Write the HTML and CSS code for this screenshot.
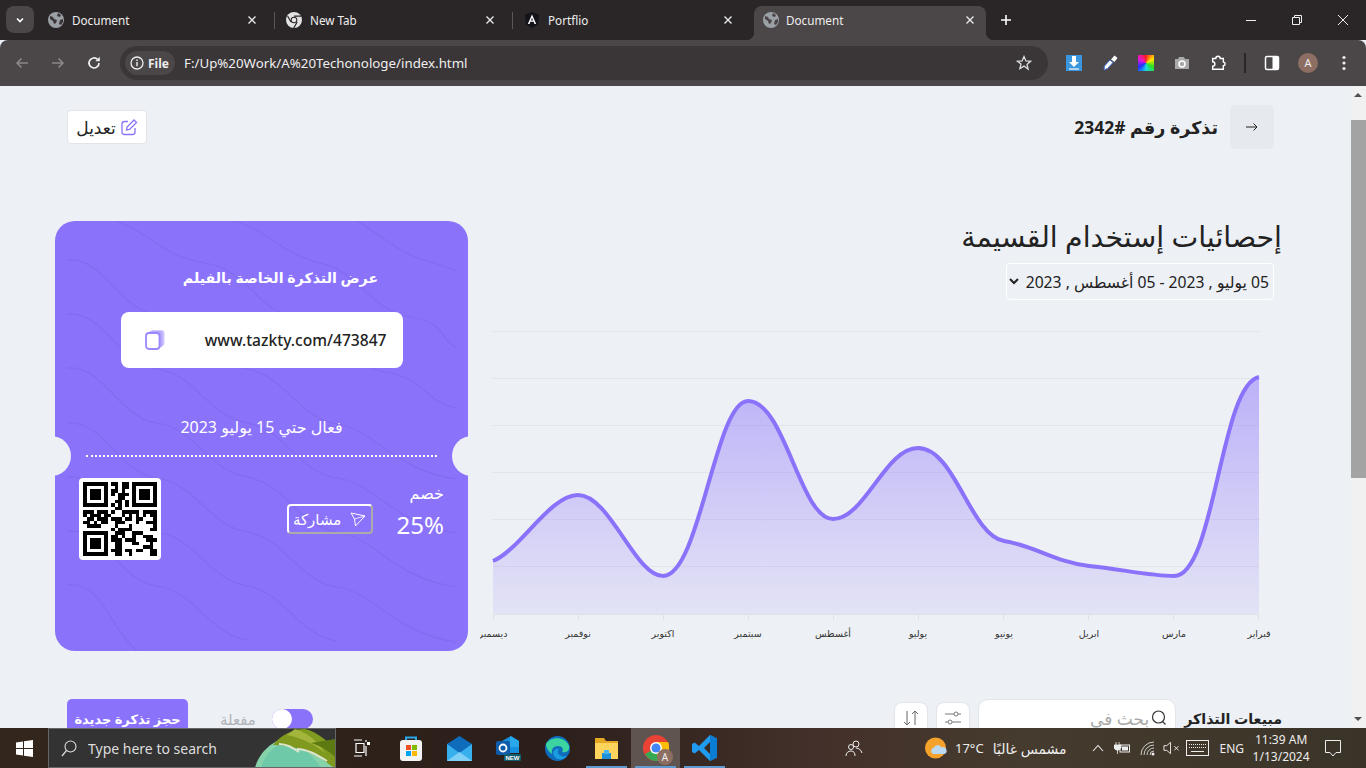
FILE: index.html
```html
<!DOCTYPE html>
<html lang="ar">
<head>
<meta charset="UTF-8" />
<meta name="viewport" content="width=device-width, initial-scale=1" />
<title>Document</title>
<link rel="stylesheet" href="styles.css">
</head>
<body>

<!-- tabs -->
<div class="tabstrip">
  <div class="tabmenu">
    <svg width="10" height="10" viewBox="0 0 10 10"><path d="M2 3.5l3 3 3-3" fill="none" stroke="#fff" stroke-width="1.6"/></svg>
  </div>
  <div class="tab">
    <svg class="favicon" viewBox="0 0 16 16"><circle cx="8" cy="8" r="8" fill="#9aa0a6"/><path d="M2 4l3 1 1 2 3 1-1 3-2 1-1-3-3-2zM10 1l3 2-1 2-3-1zM12 8l3-1v3l-2 3-2-1z" fill="#3a3537"/></svg>
    <span class="tab-title">Document</span>
    <svg class="tab-x" viewBox="0 0 10 10"><path d="M1.5 1.5l7 7M8.5 1.5l-7 7" stroke="#e8e8e8" stroke-width="1.4"/></svg>
  </div>
  <i class="tab-sep"></i>
  <div class="tab">
    <svg class="favicon" viewBox="0 0 16 16"><circle cx="8" cy="8" r="8" fill="#e4e4e4"/><path d="M8 4.2h7M5 10L1.6 4M11.2 10l-3.500 6" stroke="#292526" stroke-width="1.2"/><circle cx="8" cy="8" r="3.300" fill="#292526"/><circle cx="8" cy="8" r="2.300" fill="#e4e4e4"/></svg>
    <span class="tab-title">New Tab</span>
    <svg class="tab-x" viewBox="0 0 10 10"><path d="M1.5 1.5l7 7M8.5 1.5l-7 7" stroke="#e8e8e8" stroke-width="1.4"/></svg>
  </div>
  <i class="tab-sep"></i>
  <div class="tab">
    <svg class="favicon" viewBox="0 0 16 16"><path d="M8 0l7 2.500-1 10L8 16l-6-3.500-1-10z" fill="#15131a"/><path d="M8 2.500L3.800 12h1.700l.9-2.200h3.200l.9 2.200h1.700zM7 8.400L8 5.800l1 2.600z" fill="#fff"/></svg>
    <span class="tab-title">Portflio</span>
    <svg class="tab-x" viewBox="0 0 10 10"><path d="M1.5 1.5l7 7M8.5 1.5l-7 7" stroke="#e8e8e8" stroke-width="1.4"/></svg>
  </div>
  <div class="tab tab-active">
    <svg class="favicon" viewBox="0 0 16 16"><circle cx="8" cy="8" r="8" fill="#9aa0a6"/><path d="M2 4l3 1 1 2 3 1-1 3-2 1-1-3-3-2zM10 1l3 2-1 2-3-1zM12 8l3-1v3l-2 3-2-1z" fill="#4b4647"/></svg>
    <span class="tab-title">Document</span>
    <svg class="tab-x" viewBox="0 0 10 10"><path d="M1.5 1.5l7 7M8.5 1.5l-7 7" stroke="#e8e8e8" stroke-width="1.4"/></svg>
  </div>
  <svg class="newtab" width="12" height="12" viewBox="0 0 12 12"><path d="M6 1v10M1 6h10" stroke="#fff" stroke-width="1.6"/></svg>
  <div class="winbtns">
    <svg width="12" height="12" viewBox="0 0 12 12"><path d="M1 6.500h10" stroke="#eee" stroke-width="1"/></svg>
    <svg width="12" height="12" viewBox="0 0 12 12"><path d="M1.500 3.500h7v7h-7zM3.500 3.500v-2h7v7h-2" fill="none" stroke="#eee" stroke-width="1"/></svg>
    <svg width="12" height="12" viewBox="0 0 12 12"><path d="M1 1l10 10M11 1L1 11" stroke="#eee" stroke-width="1"/></svg>
  </div>
</div>

<!-- toolbar -->
<div class="toolbar">
  <svg class="nav-icon" viewBox="0 0 16 16"><path d="M14 8H3M7.500 3.500L3 8l4.500 4.500" fill="none" stroke="#8d898a" stroke-width="1.500"/></svg>
  <svg class="nav-icon" viewBox="0 0 16 16"><path d="M2 8h11M8.500 3.500L13 8l-4.500 4.500" fill="none" stroke="#8d898a" stroke-width="1.500"/></svg>
  <svg class="nav-icon" viewBox="0 0 16 16"><path d="M13 8a5 5 0 1 1-1.500-3.600" fill="none" stroke="#f1f1f1" stroke-width="1.700"/><path d="M13.800 1.800v4.400H9.400z" fill="#f1f1f1"/></svg>
  <div class="omnibox">
    <div class="chip">
      <svg width="14" height="14" viewBox="0 0 14 14"><circle cx="7" cy="7" r="6" fill="none" stroke="#eee" stroke-width="1.300"/><path d="M7 6v4.200M7 3.600v1.300" stroke="#eee" stroke-width="1.400"/></svg>
      <span>File</span>
    </div>
    <span class="url">F:/Up%20Work/A%20Techonologe/index.html</span>
    <svg class="star" width="16" height="16" viewBox="0 0 16 16"><path d="M8 1.500l1.900 4.400 4.700.4-3.600 3.100 1.100 4.700L8 11.100l-4.100 2.500L5 8.900 1.400 6.300l4.700-.4z" fill="none" stroke="#ddd" stroke-width="1.300"/></svg>
  </div>
  <div class="extensions">
    <svg viewBox="0 0 16 16"><rect width="16" height="16" fill="#3a96dd"/><path d="M6 1h4v6h3l-5 5-5-5h3z" fill="#fff"/><path d="M3 14h10" stroke="#fff" stroke-width="1.200"/></svg>
    <svg viewBox="0 0 16 16"><path d="M2.500 11l5.500-6 3 2.500-5.500 6-3.500 1.500z" fill="#fff" stroke="#3f6fd0" stroke-width="1"/><path d="M9 4.500L12.500.5l3 2.500-3 4z" fill="#fff"/></svg>
    <span class="ext-color"></span>
    <svg viewBox="0 0 16 16"><path d="M1 4h3l1-2h5l1 2h4v10H1z" fill="#a9a9a9"/><circle cx="8" cy="9" r="3" fill="none" stroke="#fff" stroke-width="1.500"/></svg>
    <svg viewBox="0 0 18 18"><path d="M3 4h3.500a2.500 2.500 0 0 1 5 0H15v4a2 2 0 0 1 0 4v4H3v-3.500a2.500 2.500 0 0 0 0-5z" fill="none" stroke="#fff" stroke-width="1.600"/></svg>
    <i class="ext-sep"></i>
    <svg viewBox="0 0 16 16"><rect x="1.500" y="1.500" width="13" height="13" rx="1.500" fill="none" stroke="#fff" stroke-width="1.500"/><rect x="8.500" y="1.500" width="6" height="13" fill="#fff"/></svg>
    <span class="avatar">A</span>
    <svg viewBox="0 0 16 16"><circle cx="8" cy="2.500" r="1.600" fill="#eee"/><circle cx="8" cy="8" r="1.600" fill="#eee"/><circle cx="8" cy="13.500" r="1.600" fill="#eee"/></svg>
  </div>
</div>

<!-- page + scrollbar -->
<div class="viewport">
  <main class="page" dir="rtl">
    <header class="ticket-head">
      <div class="head-right">
        <button class="back-btn">
          <svg width="14" height="10" viewBox="0 0 14 10"><path d="M1 5h11M8.500 1.500L12 5 8.500 8.500" fill="none" stroke="#222" stroke-width="1"/></svg>
        </button>
        <h1 class="head-title">تذكرة رقم #2342</h1>
      </div>
      <button class="edit-btn">
        <svg width="18" height="18" viewBox="0 0 18 18"><path d="M15 10v4a2.500 2.500 0 0 1-2.500 2.500h-8A2.500 2.500 0 0 1 2 14V6a2.500 2.500 0 0 1 2.500-2.500H8" fill="none" stroke="#8a72fb" stroke-width="1.300"/><path d="M6.500 12l.6-3L14 2l2.500 2.500-7 6.900z" fill="none" stroke="#8a72fb" stroke-width="1.300"/></svg>
        <span>تعديل</span>
      </button>
    </header>

    <section class="stats">
      <div class="usage">
        <h2 class="usage-title">إحصائيات إستخدام القسيمة</h2>
        <select class="range-select">
          <option>05 يوليو , 2023 - 05 أغسطس , 2023</option>
        </select>
        <svg class="chart" width="802" height="331" viewBox="480 320 802 331">
          <defs>
            <linearGradient id="areaFill" x1="0" y1="377" x2="0" y2="614" gradientUnits="userSpaceOnUse">
              <stop offset="0" stop-color="#8a72fb" stop-opacity=".5"/>
              <stop offset="1" stop-color="#8a72fb" stop-opacity=".1"/>
            </linearGradient>
          </defs>
          <g stroke="#e1e4e9" stroke-width="1">
            <path d="M493 331.500H1259M493 378.500H1259M493 425.500H1259M493 472.500H1259M493 519.500H1259M493 566.500H1259"/>
          </g>
          <path d="M493 561C520 550 550 495 578 495C610 495 635 576 663 576C700 576 715 401 748 401C785 401 800 519 833 519C865 519 885 448 918 448C955 448 970 535 1004 541C1035 546 1055 562 1089 566C1120 569 1150 576 1174 576C1215 576 1220 385 1259 377V614H493Z" fill="url(#areaFill)"/>
          <path d="M493 561C520 550 550 495 578 495C610 495 635 576 663 576C700 576 715 401 748 401C785 401 800 519 833 519C865 519 885 448 918 448C955 448 970 535 1004 541C1035 546 1055 562 1089 566C1120 569 1150 576 1174 576C1215 576 1220 385 1259 377" fill="none" stroke="#8a72fb" stroke-width="4"/>
          <path d="M493 614.500H1259M493.500 614v6M578.500 614v6M663.500 614v6M748.500 614v6M833.500 614v6M918.500 614v6M1003.500 614v6M1088.500 614v6M1173.500 614v6M1258.500 614v6" stroke="#dfe1e6" stroke-width="1" fill="none"/>
          <g class="chart-labels" text-anchor="middle">
            <text x="493" y="637">ديسمبر</text>
            <text x="578" y="637">نوفمبر</text>
            <text x="663" y="637">اكتوبر</text>
            <text x="748" y="637">سبتمبر</text>
            <text x="833" y="637">أغسطس</text>
            <text x="918" y="637">يوليو</text>
            <text x="1004" y="637">يونيو</text>
            <text x="1089" y="637">ابريل</text>
            <text x="1174" y="637">مارس</text>
            <text x="1259" y="637">فبراير</text>
          </g>
        </svg>
      </div>

      <div class="ticket">
        <svg class="ticket-waves" width="389" height="430" viewBox="0 0 389 430">
          <g fill="none" stroke="#000" stroke-opacity=".055" stroke-width="1.200">
            <path d="M-0 39c36-4 52 50 90 55s52 48 90 54 52 50 90 55 56 46 119 55"/>
            <path d="M0 93c36-4 52 50 90 55s52 48 90 54 52 50 90 55 56 46 119 55"/>
            <path d="M0 147c36-4 52 50 90 55s52 48 90 54 52 50 90 55 56 46 119 55"/>
            <path d="M0 202c36-4 52 50 90 55s52 48 90 54 52 50 90 55 56 46 119 55"/>
            <path d="M0 256c36-4 52 50 90 55s52 48 90 54 52 50 90 55"/>
            <path d="M0 310c36-4 52 50 90 55s52 48 90 54"/>
            <path d="M0 364c36-4 40 40 70 66"/>
            <path d="M50 0c36 14 46 36 88 42s52 48 90 54 52 50 90 55 40 30 71 36"/>
            <path d="M165 0c30 4 50 34 88 42s52 48 90 54 30 24 46 30"/>
            <path d="M290 0c20 10 40 34 78 42l21 8"/>
          </g>
        </svg>
        <h3 class="ticket-title">عرض التذكرة الخاصة بالفيلم</h3>
        <div class="ticket-link">
          <span class="link-text" dir="ltr">www.tazkty.com/473847</span>
          <svg width="20" height="20" viewBox="0 0 20 20"><rect x="5.500" y="0" width="14" height="16" rx="3" fill="#cfc6fe"/><rect x="3.500" y="1" width="14" height="16.500" rx="3" fill="#b5a8fd"/><rect x="1" y="3" width="13.500" height="16" rx="3" fill="#fff" stroke="#9c88fc" stroke-width="1.800"/></svg>
        </div>
        <p class="ticket-date">فعال حتي 15 يوليو 2023</p>
        <div class="ticket-line"></div>
        <div class="ticket-foot">
          <div class="foot-right">
            <div class="discount">
              <span class="discount-label">خصم</span>
              <span class="discount-value" dir="ltr">25%</span>
            </div>
            <button class="share-btn">
              <svg width="16" height="16" viewBox="0 0 16 16"><path d="M1 2l14 3-9.500 10L4.500 8z" fill="none" stroke="#fff" stroke-width="1"/><path d="M4.500 8L15 5" stroke="#fff" stroke-width=".8"/></svg>
              <span>مشاركة</span>
            </button>
          </div>
          <div class="qr">
            <svg width="74" height="74" viewBox="0 0 21 21" shape-rendering="crispEdges">
              <path fill-rule="evenodd" d="M0 0h7v7H0zM1 1v5h5V1zM2 2h3v3H2zM14 0h7v7h-7zM15 1v5h5V1zM16 2h3v3h-3zM0 14h7v7H0zM1 15v5h5v-5zM2 16h3v3H2z"/>
              <path stroke="#000" stroke-width="1" fill="none" d="M8 .5h2M11 .5h2M9 1.500h1M11 1.500h2M8 2.500h2M11 2.500h1M8 3.500h1M10 3.500h3M10 4.500h2M9 5.500h2M12 5.500h1M8 6.500h1M10 6.500h1M12 6.500h1M9 7.500h2M0 8.500h3M4 8.500h3M8 8.500h1M11 8.500h3M14 8.500h2M17 8.500h4M0 9.500h1M2 9.500h3M6 9.500h2M11 9.500h1M13 9.500h1M15 9.500h1M17 9.500h1M19 9.500h2M1 10.500h2M4 10.500h3M8 10.500h3M12 10.500h2M15 10.500h2M20 10.500h1M0 11.500h2M3 11.500h1M5 11.500h2M9 11.500h3M15 11.500h1M18 11.500h3M1 12.500h4M9 12.500h1M13 12.500h1M20 12.500h1M8 13.500h1M10 13.500h4M19 13.500h2M9 14.500h3M14 14.500h3M8 15.500h2M11 15.500h1M14 15.500h1M17 15.500h3M8 16.500h3M12 16.500h3M18 16.500h3M9 17.500h2M14 17.500h2M19 17.500h1M9 18.500h2M17 18.500h3M8 19.500h3M12 19.500h2M15 19.500h2M19 19.500h2M9 20.500h2M13 20.500h1M19 20.500h2"/>
            </svg>
          </div>
        </div>
      </div>
    </section>

    <section class="sales-bar">
      <div class="sales-right">
        <h4 class="sales-title">مبيعات التذاكر</h4>
        <div class="search">
          <svg width="16" height="16" viewBox="0 0 16 16"><circle cx="7.500" cy="7" r="6" fill="none" stroke="#333" stroke-width="1.200"/><path d="M11.500 11.500l3 3" stroke="#333" stroke-width="1.200"/></svg>
          <span>بحث في</span>
        </div>
        <button class="square-btn">
          <svg width="16" height="16" viewBox="0 0 16 16"><path d="M0 4h9M13 4h3M0 12h3M7 12h9" stroke="#777" stroke-width="1"/><circle cx="11" cy="4" r="2" fill="none" stroke="#777"/><circle cx="5" cy="12" r="2" fill="none" stroke="#777"/></svg>
        </button>
        <button class="square-btn">
          <svg width="16" height="16" viewBox="0 0 16 16"><path d="M4 1v14M1 12l3 3 3-3M12 15V1M9 4l3-3 3 3" fill="none" stroke="#666" stroke-width="1"/></svg>
        </button>
      </div>
      <div class="sales-left">
        <span class="toggle"></span>
        <span class="toggle-label">مفعلة</span>
        <button class="book-btn">حجز تذكرة جديدة</button>
      </div>
    </section>
  </main>
  <div class="scrollbar">
    <i class="arrow-up"></i>
    <i class="thumb"></i>
    <i class="arrow-down"></i>
  </div>
</div>

<!-- windows taskbar -->
<footer class="taskbar">
  <div class="start">
    <svg width="17" height="17" viewBox="0 0 17 17"><path d="M0 2.400L7 1.400v6.600H0zM8 1.300L17 0v8H8zM0 9h7v6.600L0 14.600zM8 9h9v8l-9-1.300z" fill="#fff"/></svg>
  </div>
  <div class="searchbox">
    <svg width="16" height="17" viewBox="0 0 16 17"><circle cx="9.500" cy="6.500" r="5.500" fill="none" stroke="#ddd" stroke-width="1.100"/><path d="M5.500 10.500L1 16" stroke="#ddd" stroke-width="1.200"/></svg>
    <span>Type here to search</span>
    <svg class="search-art" width="80" height="39" viewBox="0 0 80 39">
      <path d="M0 39C4 22 20 10 34 8c18 4 34 18 46 30v1z" fill="#86d3ab"/>
      <path d="M6 39c4-14 12-22 26-26 14 2 26 14 34 26z" fill="#6ec9a8"/>
      <path d="M18 16C26 6 38 0 50 0c12 2 24 14 30 20v20C62 24 40 16 18 16z" fill="#7f9a1f"/>
      <path d="M40 0c8 2 22 10 30 24-10-8-20-14-38-18z" fill="#a3b53a"/>
      <path d="M24 15c8 0 14 4 20 8M42 20c10 0 20 6 30 12" stroke="#dfe6d0" stroke-width="2" fill="none"/>
      <path d="M56 14c8 2 18 8 24 14V10z" fill="#5d7a12"/>
    </svg>
  </div>
  <div class="task-icons">
    <div class="task-icon">
      <svg width="18" height="18" viewBox="0 0 18 18"><path d="M1 1h8M13 1v2M1 17h8M3 4.500h8v9H3zM13 7v10" fill="none" stroke="#fff" stroke-width="1.200"/><rect x="14" y="3" width="3" height="3" fill="#fff"/></svg>
    </div>
    <div class="task-icon">
      <svg width="24" height="26" viewBox="0 0 24 26"><path d="M7 6V2.500h10V6" fill="none" stroke="#29a8e8" stroke-width="2"/><rect x="1" y="5" width="22" height="21" rx="3" fill="#f3f3f3"/><rect x="7" y="10" width="5" height="5" fill="#f25022"/><rect x="13" y="10" width="5" height="5" fill="#7fba00"/><rect x="7" y="16" width="5" height="5" fill="#00a4ef"/><rect x="13" y="16" width="5" height="5" fill="#ffb900"/></svg>
    </div>
    <div class="task-icon">
      <svg width="25" height="25" viewBox="0 0 25 25"><path d="M0 8L12.500 0 25 8v17H0z" fill="#0f6cbd"/><path d="M0 8l12.500 9L25 8v17H0z" fill="#39b0ee"/><path d="M0 25l12.500-9L25 25z" fill="#7fd0f7"/></svg>
    </div>
    <div class="task-icon">
      <svg width="25" height="25" viewBox="0 0 25 25"><path d="M6 5l9-5 8 5v12H6z" fill="#1490df"/><path d="M14 0l9 5v6h-9z" fill="#28a8ea"/><rect x="0" y="5" width="14" height="14" rx="2" fill="#0f5cab"/><circle cx="7" cy="12" r="3.500" fill="none" stroke="#fff" stroke-width="1.800"/><rect x="8" y="18" width="17" height="7" rx="1" fill="#0e5e6f"/><text class="new-tag" x="16.500" y="24">NEW</text></svg>
    </div>
    <div class="task-icon">
      <svg width="25" height="25" viewBox="0 0 25 25"><circle cx="12.500" cy="12.500" r="12.500" fill="#0f6cbd"/><path d="M1 8C4 1 20-1 24 10c1 5-3 7-7 6 2-3 0-6-4-6-5 0-7 4-6 8-3-2-6-6-6-10z" fill="#3bd3a0"/><path d="M8 17c1-4 4-5 6-4-3 3 0 9 8 7-4 5-12 5-14-3z" fill="#1b9de2"/></svg>
    </div>
    <div class="task-icon task-open">
      <svg width="25" height="24" viewBox="0 0 25 24"><path d="M1 2h9l2 3h12v17H1z" fill="#e5a823"/><rect x="1" y="7" width="23" height="16" fill="#ffd45c"/><path d="M8 23v-6h9v6" fill="#1e90d8"/><rect x="10" y="14" width="5" height="4" fill="#47b4f2"/></svg>
    </div>
    <div class="task-icon task-open task-current">
      <svg width="26" height="26" viewBox="0 0 26 26"><circle cx="13" cy="13" r="13" fill="#ea4335"/><path d="M13 13L2 19a13 13 0 0 0 13 6.800z" fill="#34a853"/><path d="M13 13l2 12.800A13 13 0 0 0 25 7H13z" fill="#fbbc05"/><circle cx="13" cy="13" r="6" fill="#fff"/><circle cx="13" cy="13" r="4.500" fill="#4285f4"/></svg>
      <span class="chrome-badge">A</span>
    </div>
    <div class="task-icon task-open">
      <svg width="25" height="26" viewBox="0 0 25 26"><path d="M18 0l7 3.500v19L18 26 7 15l-4.500 3.500L0 17V9l2.500-1.500L7 11zM18 7l-6 6 6 6z" fill="#1f9cf0"/><path d="M18 0l7 3.500v19L18 26V19 7z" fill="#0a7cd1"/></svg>
    </div>
  </div>
  <div class="tray">
    <svg class="tray-people" width="18" height="17" viewBox="0 0 18 17"><circle cx="11" cy="4" r="3" fill="none" stroke="#eee"/><circle cx="6" cy="7" r="2.500" fill="none" stroke="#eee"/><path d="M1 16c0-3 2-5 5-5s4 2 4 5M11 8c3 0 5 2 6 5" fill="none" stroke="#eee"/></svg>
    <svg class="tray-weather" width="22" height="22" viewBox="0 0 22 22"><circle cx="10.500" cy="11" r="10.500" fill="#f5a22c"/><path d="M8 17a3.500 3.500 0 0 1 1-6.500 4 4 0 0 1 7.500 0 3.500 3.500 0 0 1 3 6.500z" fill="#bcd9f2"/></svg>
    <span class="tray-temp">17°C</span>
    <span class="tray-weather-text" dir="rtl">مشمس غالبًا</span>
    <svg class="tray-chevron" width="12" height="8" viewBox="0 0 12 8"><path d="M1 7l5-5.500L11 7" fill="none" stroke="#eee" stroke-width="1.100"/></svg>
    <svg class="tray-battery" width="16" height="12" viewBox="0 0 16 12"><path d="M2 0v3M5 0v3M0 3h7v3l-2 2H2L0 6zM3.500 8v4" stroke="#eee" fill="#eee" stroke-width=".8"/><rect x="6" y="3" width="9.500" height="7" fill="none" stroke="#eee"/><rect x="8" y="4.500" width="6" height="4" fill="#eee"/></svg>
    <svg class="tray-wifi" width="15" height="15" viewBox="0 0 15 15"><path d="M1 14A13 13 0 0 1 14 1M4 14A10 10 0 0 1 14 4M7 14a7 7 0 0 1 7-7M10 14a4 4 0 0 1 4-4" fill="none" stroke="#ccc" stroke-width="1"/><circle cx="13" cy="13" r="1.500" fill="#eee"/></svg>
    <svg class="tray-volume" width="16" height="14" viewBox="0 0 17 14"><path d="M1 4.500h3L8 1v12L4 9.500H1z" fill="none" stroke="#eee"/><path d="M12 5l4.500 4.500M16.500 5L12 9.500" stroke="#eee"/></svg>
    <svg class="tray-keys" width="23" height="16" viewBox="0 0 23 16"><rect x=".5" y=".5" width="22" height="15" fill="none" stroke="#eee"/><path d="M3 4.500h17M3 7.500h17" stroke="#eee" stroke-dasharray="1 1"/><path d="M5 11.500h13" stroke="#eee"/></svg>
    <span class="tray-lang">ENG</span>
    <div class="clock"><span>11:39 AM</span><span>1/13/2024</span></div>
    <svg class="tray-note" width="16" height="17" viewBox="0 0 16 17"><path d="M.5.5h15v12H11l-3 3.500-3-3.500H.5z" fill="none" stroke="#eee"/></svg>
  </div>
</footer>

</body>
</html>
```

FILE: styles.css
```css
* { box-sizing: border-box; }
html, body { height: 100%; }
body {
  margin: 0;
  display: flex;
  flex-direction: column;
  height: 100vh;
  overflow: hidden;
  background: #edf0f5;
  color: #222;
  font-family: "Noto Sans", "DejaVu Sans", sans-serif;
}
button { font-family: inherit; cursor: pointer; }
h1, h2, h3, h4, p { margin: 0; }
i { display: block; }

/* browser tabs */
.tabstrip {
  height: 40px;
  flex: none;
  background: #2a2627;
  display: flex;
  align-items: flex-end;
  padding-left: 6px;
  color: #eee;
  font-size: 11.700px;
}
.tabmenu {
  width: 28px;
  height: 27px;
  margin: 0 6px 7px 0;
  border-radius: 8px;
  background: #4b4647;
  display: flex;
  align-items: center;
  justify-content: center;
}
.tab {
  width: 234px;
  height: 34px;
  padding: 0 14px 6px 8px;
  display: flex;
  align-items: center;
  gap: 8px;
  flex: none;
}
.tab-title { flex: 1; }
.favicon { width: 16px; height: 16px; flex: none; }
.tab-x { width: 10px; height: 10px; margin: 0 3px; flex: none; }
.tab-sep {
  width: 1px;
  height: 17px;
  margin: 0 3px 11px 0;
  background: #5a5556;
}
.tab-active {
  position: relative;
  width: 232px;
  margin-left: 4px;
  padding: 0 8px 6px 9px;
  background: #4b4647;
  border-radius: 8px 8px 0 0;
}
.tab-active .tab-title { margin-left: -1px; }
.tab-active::before,
.tab-active::after {
  content: "";
  position: absolute;
  bottom: 0;
  width: 8px;
  height: 8px;
}
.tab-active::before { left: -8px; background: radial-gradient(circle at 0 0, transparent 8px, #4b4647 8.500px); }
.tab-active::after { right: -8px; background: radial-gradient(circle at 100% 0, transparent 8px, #4b4647 8.500px); }
.newtab { margin: 0 0 14px 14px; }
.winbtns {
  margin-left: auto;
  width: 138px;
  height: 40px;
  padding: 0 17px;
  align-self: flex-start;
  display: flex;
  align-items: center;
  justify-content: space-between;
}

/* toolbar */
.toolbar {
  height: 46px;
  flex: none;
  display: flex;
  align-items: center;
  padding: 0 0 0 14px;
  gap: 20px;
  background: #4b4647;
  border-radius: 8px 8px 0 0;
  color: #eee;
}
.nav-icon { width: 16px; height: 16px; flex: none; }
.omnibox {
  width: 928px;
  height: 34px;
  margin-left: -2px;
  padding: 0 16px 0 5px;
  border-radius: 17px;
  background: #3a3537;
  display: flex;
  align-items: center;
  font-size: 13.300px;
  flex: none;
}
.chip {
  width: 50px;
  height: 24px;
  padding-left: 5px;
  border-radius: 12px;
  background: #4b4647;
  display: flex;
  align-items: center;
  gap: 4px;
  font-size: 12px;
  font-weight: 700;
}
.url { margin-left: 9px; flex: 1; }
.extensions {
  display: flex;
  align-items: center;
  margin-left: -12px;
}
.extensions svg { width: 16px; height: 16px; margin: 0 10px; flex: none; }
.ext-color {
  width: 16px;
  height: 16px;
  margin: 0 10px;
  background: conic-gradient(#ff1e1e, #ffe600, #28e028, #18d8e8, #2030ff, #e815d9, #ff1e1e);
}
.ext-sep { width: 2px; height: 20px; background: #2a2627; margin: 0 8px; }
.avatar {
  width: 20px;
  height: 20px;
  border-radius: 50%;
  background: #8d6e63;
  color: #eee;
  font-size: 11px;
  text-align: center;
  line-height: 20px;
  margin: 0 8px;
}

/* page */
.viewport {
  flex: 1;
  min-height: 0;
  display: flex;
}
.page {
  flex: 1;
  min-width: 0;
  height: 100%;
  overflow: hidden;
}
.ticket-head {
  display: flex;
  align-items: center;
  justify-content: space-between;
  padding: 19px 77px 0 67px;
}
.head-right { display: flex; align-items: center; gap: 12px; }
.back-btn {
  width: 44px;
  height: 44px;
  border: none;
  border-radius: 6px;
  background: #e6e9ed;
  padding: 0;
}
.head-title { font-size: 17.500px; font-weight: 700; color: #222; }
.edit-btn {
  width: 80px;
  height: 34px;
  border: 1px solid #e2e4e9;
  border-radius: 4px;
  background: #fff;
  display: flex;
  align-items: center;
  justify-content: center;
  gap: 4px;
  font-size: 17px;
  color: #222;
  padding: 0;
}

.stats {
  display: grid;
  grid-template-columns: 802px 413px;
  justify-content: start;
  gap: 12px;
  padding: 0 69px 0 55px;
  margin-top: 72px;
  height: 430px;
}
.usage-title { font-size: 28.400px; font-weight: 400; color: #222; line-height: 30px; }
.range-select {
  display: block;
  width: 268px;
  height: 37px;
  margin: 12px 8px 0 0;
  padding: 0;
  background: transparent;
  border: 1px solid #fff;
  border-radius: 4px;
  font-family: inherit;
  font-size: 15.700px;
  color: #222;
}
.chart { display: block; margin-top: 20px; }
.chart-labels { font-size: 9.500px; fill: #333; font-family: "DejaVu Sans", sans-serif; }

.ticket {
  position: relative;
  padding: 45px 31px 0;
  background: #8a72fb;
  border-radius: 20px;
  color: #fff;
  overflow: hidden;
}
.ticket::before,
.ticket::after {
  content: "";
  position: absolute;
  top: 215px;
  width: 40px;
  height: 40px;
  border-radius: 50%;
  background: #edf0f5;
}
.ticket::before { right: -24px; }
.ticket::after { left: -24px; }
.ticket-waves { position: absolute; top: 0; left: 12px; }
.ticket > *:not(.ticket-waves) { position: relative; }
.ticket-title {
  font-size: 14.200px;
  font-weight: 700;
  line-height: 24px;
  text-align: center;
  padding-left: 38px;
}
.ticket-link {
  width: 282px;
  height: 56px;
  margin: 22px auto 0;
  padding: 0 16px 0 24px;
  background: #fff;
  border-radius: 8px;
  display: flex;
  align-items: center;
  justify-content: space-between;
}
.link-text { color: #222; font-size: 15.600px; font-weight: 500; }
.ticket-date {
  margin-top: 47px;
  font-size: 16px;
  line-height: 24px;
  text-align: center;
}
.ticket-line {
  margin-top: 16px;
  border-top: 2px dotted #fff;
}
.ticket-foot {
  margin: 21px -7px 0;
  display: flex;
  align-items: center;
  justify-content: space-between;
}
.foot-right { display: flex; align-items: center; gap: 24px; }
.discount { display: flex; flex-direction: column; gap: 4px; margin-bottom: 16px; }
.discount-label { font-size: 16px; line-height: 24px; }
.discount-value { font-size: 24px; line-height: 32px; }
.share-btn {
  width: 86px;
  height: 30px;
  padding: 0;
  border: 2px outset #fff;
  border-radius: 4px;
  background: transparent;
  color: #fff;
  font-size: 15px;
  display: flex;
  align-items: center;
  justify-content: center;
  gap: 9px;
}
.qr {
  width: 82px;
  height: 82px;
  background: #fff;
  border-radius: 4px;
  padding: 4px;
}
.qr svg { display: block; }

.sales-bar {
  display: flex;
  justify-content: space-between;
  align-items: flex-start;
  margin-top: 48px;
  padding: 0 69px 0 67px;
}
.sales-right { display: flex; align-items: flex-start; gap: 8px; }
.sales-title { font-size: 14.200px; font-weight: 700; line-height: 40px; }
.search {
  width: 198px;
  height: 44px;
  border: 1px solid #e2e4e9;
  border-radius: 10px;
  background: #fff;
  padding: 10px 8px 0;
  display: flex;
  align-items: flex-start;
  gap: 2px;
  font-size: 17px;
  line-height: 18px;
  color: #a9a9a9;
}
.square-btn {
  width: 34px;
  height: 36px;
  margin: 3px 0 0;
  border: 1px solid #e2e4e9;
  border-radius: 8px;
  background: #fff;
  padding: 0;
}
.sales-left { display: flex; align-items: flex-start; }
.toggle {
  position: relative;
  width: 41px;
  height: 20px;
  margin: 10px 0 0 16px;
  border-radius: 10px;
  background: #8a72fb;
}
.toggle::after {
  content: "";
  position: absolute;
  left: 0;
  top: 0;
  width: 20px;
  height: 20px;
  border-radius: 50%;
  background: #fff;
}
.toggle-label { font-size: 15px; color: #b0b3b8; line-height: 40px; }
.book-btn {
  width: 121px;
  height: 40px;
  margin-right: 32px;
  border: none;
  border-radius: 5px;
  background: #8a72fb;
  color: #fff;
  font-size: 13px;
  font-weight: 700;
  padding: 0;
}

.scrollbar {
  position: relative;
  width: 15px;
  flex: none;
  background: #f1f1f1;
}
.thumb {
  position: absolute;
  top: 34px;
  left: 0;
  width: 100%;
  height: 358px;
  background: #a3a3a3;
}
.arrow-up, .arrow-down {
  position: absolute;
  left: 3px;
  width: 0;
  height: 0;
  border-left: 4px solid transparent;
  border-right: 4px solid transparent;
}
.arrow-up { top: 7px; border-bottom: 4px solid #505050; }
.arrow-down { bottom: 7px; border-top: 4px solid #505050; }

/* taskbar */
.taskbar {
  height: 40px;
  flex: none;
  display: flex;
  background: linear-gradient(90deg, #33261c, #2c1f1a 40%, #43302a 60%, #453b2e 75%, #3a3428);
  color: #eee;
  font-size: 12px;
}
.start {
  width: 48px;
  flex: none;
  display: flex;
  align-items: center;
  justify-content: center;
}
.searchbox {
  position: relative;
  width: 288px;
  height: 40px;
  flex: none;
  padding: 0 0 0 12px;
  background: #333;
  border: 1px solid #666;
  display: flex;
  align-items: center;
  gap: 11px;
  font-size: 14px;
  color: #ddd;
  overflow: hidden;
}
.search-art { position: absolute; right: 0; top: 0; }
.task-icons { display: flex; flex: none; padding-left: 1px; }
.task-icon {
  position: relative;
  width: 49px;
  height: 40px;
  display: flex;
  align-items: center;
  justify-content: center;
}
.task-open::after {
  content: "";
  position: absolute;
  left: 4px;
  right: 4px;
  bottom: 0;
  height: 2px;
  background: #5f9bd0;
}
.task-current { background: #5f5450; }
.new-tag { font-size: 6px; font-weight: 700; fill: #fff; text-anchor: middle; font-family: "Liberation Sans", sans-serif; }
.chrome-badge {
  position: absolute;
  left: 26px;
  top: 21px;
  width: 16px;
  height: 16px;
  border-radius: 50%;
  background: #8d6e63;
  font-size: 10px;
  line-height: 16px;
  text-align: center;
  color: #eee;
}
.tray {
  flex: 1;
  min-width: 0;
  display: flex;
  align-items: center;
  padding-left: 116px;
  white-space: nowrap;
}
.tray svg, .tray span { flex: none; }
.tray-weather { margin-left: 62px; }
.tray-temp { margin-left: 8px; font-size: 13px; }
.tray-weather-text { margin-left: 9px; font-size: 14px; }
.tray-chevron { margin-left: 25px; }
.tray-battery { margin-left: 10px; }
.tray-wifi { margin-left: 10px; }
.tray-volume { margin-left: 8px; }
.tray-keys { margin-left: 7px; }
.tray-lang { margin-left: 11px; font-size: 12px; }
.clock {
  width: 70px;
  flex: none;
  margin-left: 2px;
  display: flex;
  flex-direction: column;
  align-items: center;
  gap: 1px;
  font-size: 12px;
}
.clock span { display: block; height: 16px; line-height: 16px; }
.tray-note { margin-left: 9px; }
```
